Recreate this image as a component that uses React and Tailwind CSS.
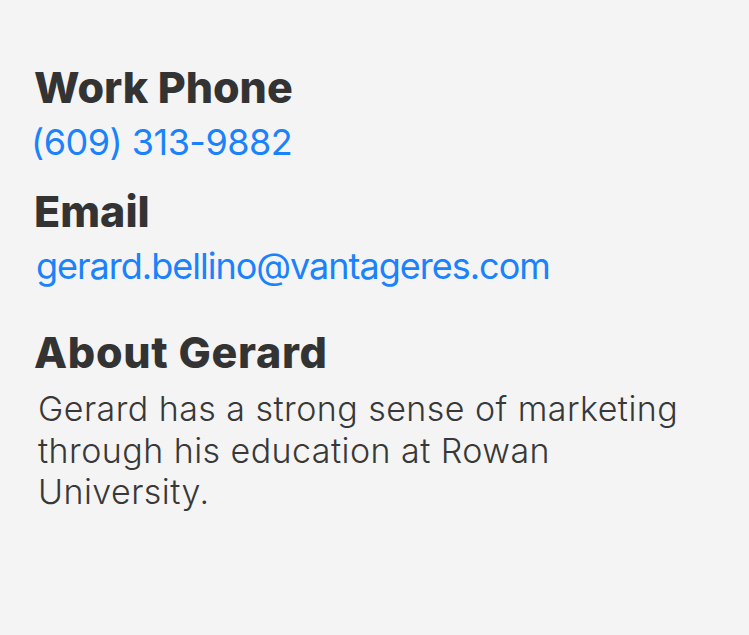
export default function App() {
  return (
    <div className="min-h-[635px] w-full bg-[#f4f4f4] text-[#333333]" style={{ fontFamily: 'Inter, "Noto Sans", sans-serif' }}>
      <div className="flex flex-col pt-[62px] pl-[34px] pr-[50px]">
        <h2 className="text-[43px] leading-[50px] font-extrabold">Work Phone</h2>
        <a className="mt-[8px] text-[36px] leading-[44px] text-[#1a82fb] -ml-[3px] tracking-[-0.5px]">(609) 313-9882</a>
        <h2 className="mt-[22px] text-[43px] leading-[50px] font-extrabold">Email</h2>
        <a className="mt-[8px] text-[36px] leading-[44px] text-[#1a82fb] ml-[2px] tracking-[-1px]">gerard.bellino@vantageres.com</a>
        <h2 className="mt-[39px] text-[43px] leading-[50px] font-extrabold tracking-[0.7px]">About Gerard</h2>
        <p className="mt-[11px] text-[34px] leading-[41.5px] font-light tracking-[0.45px] text-[#383838] ml-[4px] max-w-[680px]">
          Gerard has a strong sense of marketing through his education at Rowan University.
        </p>
      </div>
    </div>
  );
}
